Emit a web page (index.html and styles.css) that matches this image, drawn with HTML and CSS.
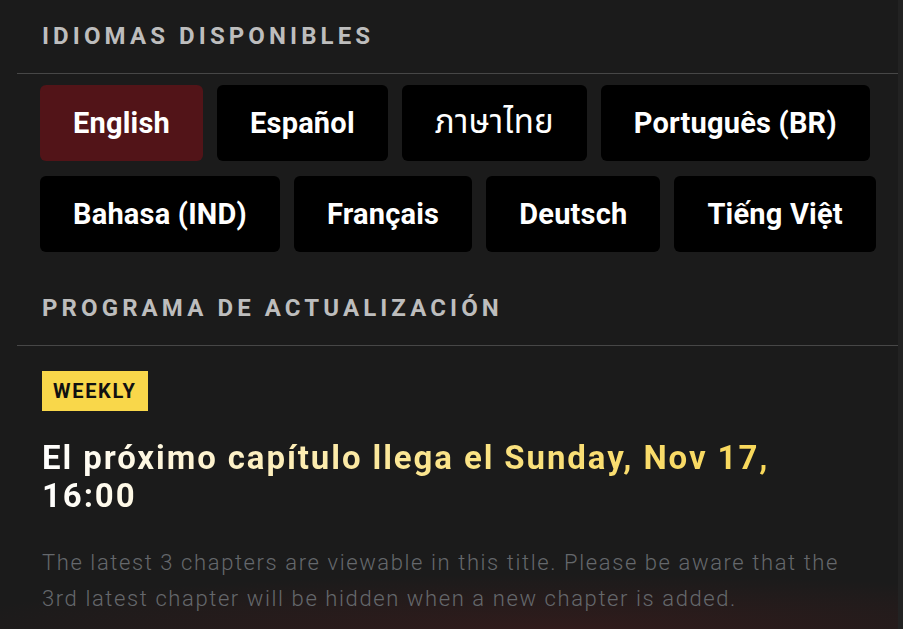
FILE: index.html
```html
<!DOCTYPE html>
<html lang="es">
<head>
<meta charset="utf-8">
<title>Idiomas</title>
<link rel="stylesheet" href="styles.css">
</head>
<body>
<div class="page">
  <main class="panel">
    <section class="block">
      <h2 class="block-title">Idiomas disponibles</h2>
      <div class="langs">
        <button class="lang active">English</button>
        <button class="lang">Español</button>
        <button class="lang lang-thai">ภาษาไทย</button>
        <button class="lang">Português (BR)</button>
        <button class="lang">Bahasa (IND)</button>
        <button class="lang">Français</button>
        <button class="lang">Deutsch</button>
        <button class="lang">Tiếng Việt</button>
      </div>
    </section>
    <section class="block">
      <h2 class="block-title">Programa de actualización</h2>
      <div class="schedule">
        <span class="badge">WEEKLY</span>
        <h3 class="next">El próximo capítulo llega el Sunday, Nov 17, 16:00</h3>
        <p class="note">The latest 3 chapters are viewable in this title. Please be aware that the 3rd latest chapter will be hidden when a new chapter is added.</p>
      </div>
    </section>
  </main>
  <div class="rail"></div>
</div>
</body>
</html>
```
FILE: styles.css
```css
* { box-sizing: border-box; }
html, body { margin: 0; padding: 0; height: 100%; }
body {
  background: #1b1b1b;
  font-family: Roboto, "Noto Sans", "Noto Sans Thai", sans-serif;
  color: #fff;
  overflow: hidden;
}
.page {
  display: flex;
  height: 629px;
  padding-left: 17px;
  background: radial-gradient(ellipse 620px 55px at 62% 100%, rgba(70, 28, 28, 0.5), rgba(27, 27, 27, 0) 100%);
}
.panel {
  flex: 1;
  min-width: 0;
}
.rail {
  width: 5px;
  background: #222222;
}
.block-title {
  margin: 0;
  padding: 22px 23px 23px 25px;
  font-size: 24px;
  line-height: 28px;
  font-weight: 700;
  letter-spacing: 4.1px;
  text-transform: uppercase;
  color: #bdbdbd;
  border-bottom: 1px solid #474747;
}
.langs {
  display: flex;
  flex-wrap: wrap;
  gap: 15px 14px;
  padding: 11px 15px 20px 23px;
}
.lang {
  height: 76px;
  padding: 0 33px;
  border: 0;
  border-radius: 6px;
  background: #000;
  color: #fff;
  font-family: Roboto, "Noto Sans", "Noto Sans Thai", sans-serif;
  font-size: 29px;
  font-weight: 700;
  letter-spacing: 0.2px;
  cursor: pointer;
}
.lang-thai { font-weight: 400; font-size: 33px; }
.lang.active { background: #521418; }
.schedule {
  padding: 25px 23px 0 25px;
}
.badge {
  display: inline-block;
  height: 40px;
  padding: 0 11px;
  line-height: 40px;
  background: #f9d74a;
  color: #111;
  font-size: 20px;
  font-weight: 700;
  letter-spacing: 1.7px;
}
.next {
  margin: 28px 0 0;
  font-size: 33px;
  line-height: 37.5px;
  font-weight: 700;
  letter-spacing: 1.9px;
  background: linear-gradient(90deg, #ffffff 0%, #fdf0c4 25%, #fbe488 50%, #f9da64 80%, #f7d54d 100%);
  -webkit-background-clip: text;
  background-clip: text;
  color: transparent;
  width: 810px;
}
.note {
  margin: 31px 0 0;
  font-size: 22px;
  line-height: 36px;
  font-weight: 300;
  letter-spacing: 1.6px;
  color: #65686c;
  max-width: 810px;
}
```
